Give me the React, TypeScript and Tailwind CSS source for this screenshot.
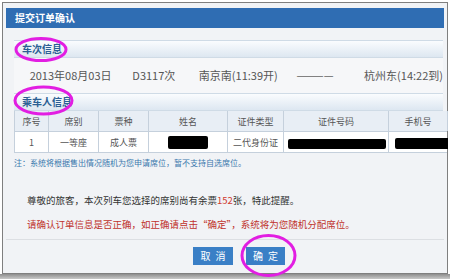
import React from "react";

const cols = [
  { w: "w-[34px]", h: "序号" },
  { w: "w-[50px]", h: "席别" },
  { w: "w-[50px]", h: "票种" },
  { w: "w-[79px]", h: "姓名" },
  { w: "w-[56px]", h: "证件类型" },
  { w: "w-[105px]", h: "证件号码" },
  { w: "w-[59px]", h: "手机号" },
];

function SectionHeader({ title }: { title: string }) {
  return (
    <div className="h-[18px] w-[429px] flex items-center pl-[8px] border-y border-[#cfdbe6] bg-gradient-to-b from-[#fafcfe] to-[#dde7f1] text-[10px] font-bold text-[#2b5f93] leading-none">
      {title}
    </div>
  );
}

export default function App() {
  return (
    <div className="relative w-[450px] h-[279px] overflow-hidden bg-white font-['Noto_Sans_CJK_SC',sans-serif]">
      <div className="pt-[2px] px-[2px]">
        <div className="h-[272px] border border-[#7f7f7f] bg-[#f1f3f6] px-[3px] pt-[5px] flex flex-col">
          <div className="h-[20px] bg-[#2f6db3] text-white font-bold text-[10px] leading-none pl-[9px] flex items-center">
            提交订单确认
          </div>

          <div className="ml-[8px] mt-[12px]">
            <SectionHeader title="车次信息" />
            <div className="h-[35px] flex items-center text-[11px] text-[#555] leading-none bg-[#f6f7f9] w-[429px]">
              <div className="w-[16px]" />
              <div className="w-[105px]">2013年08月03日</div>
              <div className="w-[68px]">D3117次</div>
              <div className="w-[100px]">南京南(11:39开)</div>
              <div className="w-[69px] text-[#666]">————</div>
              <div className="whitespace-nowrap">杭州东(14:22到)</div>
            </div>
            <SectionHeader title="乘车人信息" />

            <div className="w-[433px] border-l border-[#c5d0dc] text-[9px] text-[#555] leading-none">
              <div className="flex h-[21px] bg-[#e8eef5] border-b border-[#c5d0dc]">
                {cols.map((c) => (
                  <div key={c.h} className={`${c.w} shrink-0 flex items-center justify-center border-r border-[#c5d0dc]`}>
                    {c.h}
                  </div>
                ))}
              </div>
              <div className="flex h-[21px] bg-white border-b border-[#c5d0dc]">
                <div className="w-[34px] shrink-0 flex items-center justify-center border-r border-[#c5d0dc]">1</div>
                <div className="w-[50px] shrink-0 flex items-center justify-center border-r border-[#c5d0dc]">一等座</div>
                <div className="w-[50px] shrink-0 flex items-center justify-center border-r border-[#c5d0dc]">成人票</div>
                <div className="w-[79px] shrink-0 flex items-center justify-center border-r border-[#c5d0dc]">
                  <div className="w-[40px] h-[13px] bg-black rounded-[2px]" />
                </div>
                <div className="w-[56px] shrink-0 flex items-center justify-center border-r border-[#c5d0dc]">二代身份证</div>
                <div className="w-[105px] shrink-0 flex items-center pl-[4px] border-r border-[#c5d0dc]">
                  <div className="w-[98px] h-[10px] mt-[4px] bg-black rounded-[2px]" />
                </div>
                <div className="w-[59px] shrink-0 flex items-center pl-[6px]">
                  <div className="w-[53px] h-[11px] mt-[3px] bg-black rounded-l-[2px]" />
                </div>
              </div>
            </div>

            <div className="mt-[4px] text-[8px] leading-[12px] text-[#3a78ad] whitespace-nowrap">
              注：系统将根据售出情况随机为您申请席位，暂不支持自选席位。
            </div>

            <div className="ml-[13px] mt-[24px] text-[9.5px] leading-[14px] text-[#333] whitespace-nowrap">
              尊敬的旅客，本次列车您选择的席别尚有余票<span className="text-[#d03a2e]">152</span>张，特此提醒。
            </div>
            <div className="ml-[13px] mt-[10px] text-[9.5px] leading-[14px] text-[#c0322b] whitespace-nowrap">
              请确认订单信息是否正确，如正确请点击“确定”，系统将为您随机分配席位。
            </div>
          </div>

          <div className="mt-[8px] border-t border-[#dcdfe3]" />
          <div className="flex gap-[13px] pl-[187px] mt-[7px]">
            <div className="w-[40px] h-[18px] bg-[#3a7fc6] text-white text-[10px] leading-none flex items-center justify-center tracking-[5px] pl-[5px]">
              取消
            </div>
            <div className="w-[39px] h-[18px] bg-[#3a7fc6] text-white text-[10px] leading-none flex items-center justify-center tracking-[5px] pl-[5px]">
              确定
            </div>
          </div>
        </div>
      </div>
      <div className="h-[5px] bg-gradient-to-b from-[#8d8d8d] to-[#c9c9c9]" />

      <svg className="absolute left-0 top-0 pointer-events-none" width="450" height="279">
        <ellipse cx="41" cy="49.5" rx="25" ry="11" fill="none" stroke="#e21ee2" strokeWidth="3" />
        <ellipse cx="43.5" cy="100.5" rx="28.5" ry="13.5" fill="none" stroke="#e21ee2" strokeWidth="3" />
        <ellipse cx="268.5" cy="255.5" rx="26.5" ry="20" fill="none" stroke="#e21ee2" strokeWidth="3" />
      </svg>
    </div>
  );
}
